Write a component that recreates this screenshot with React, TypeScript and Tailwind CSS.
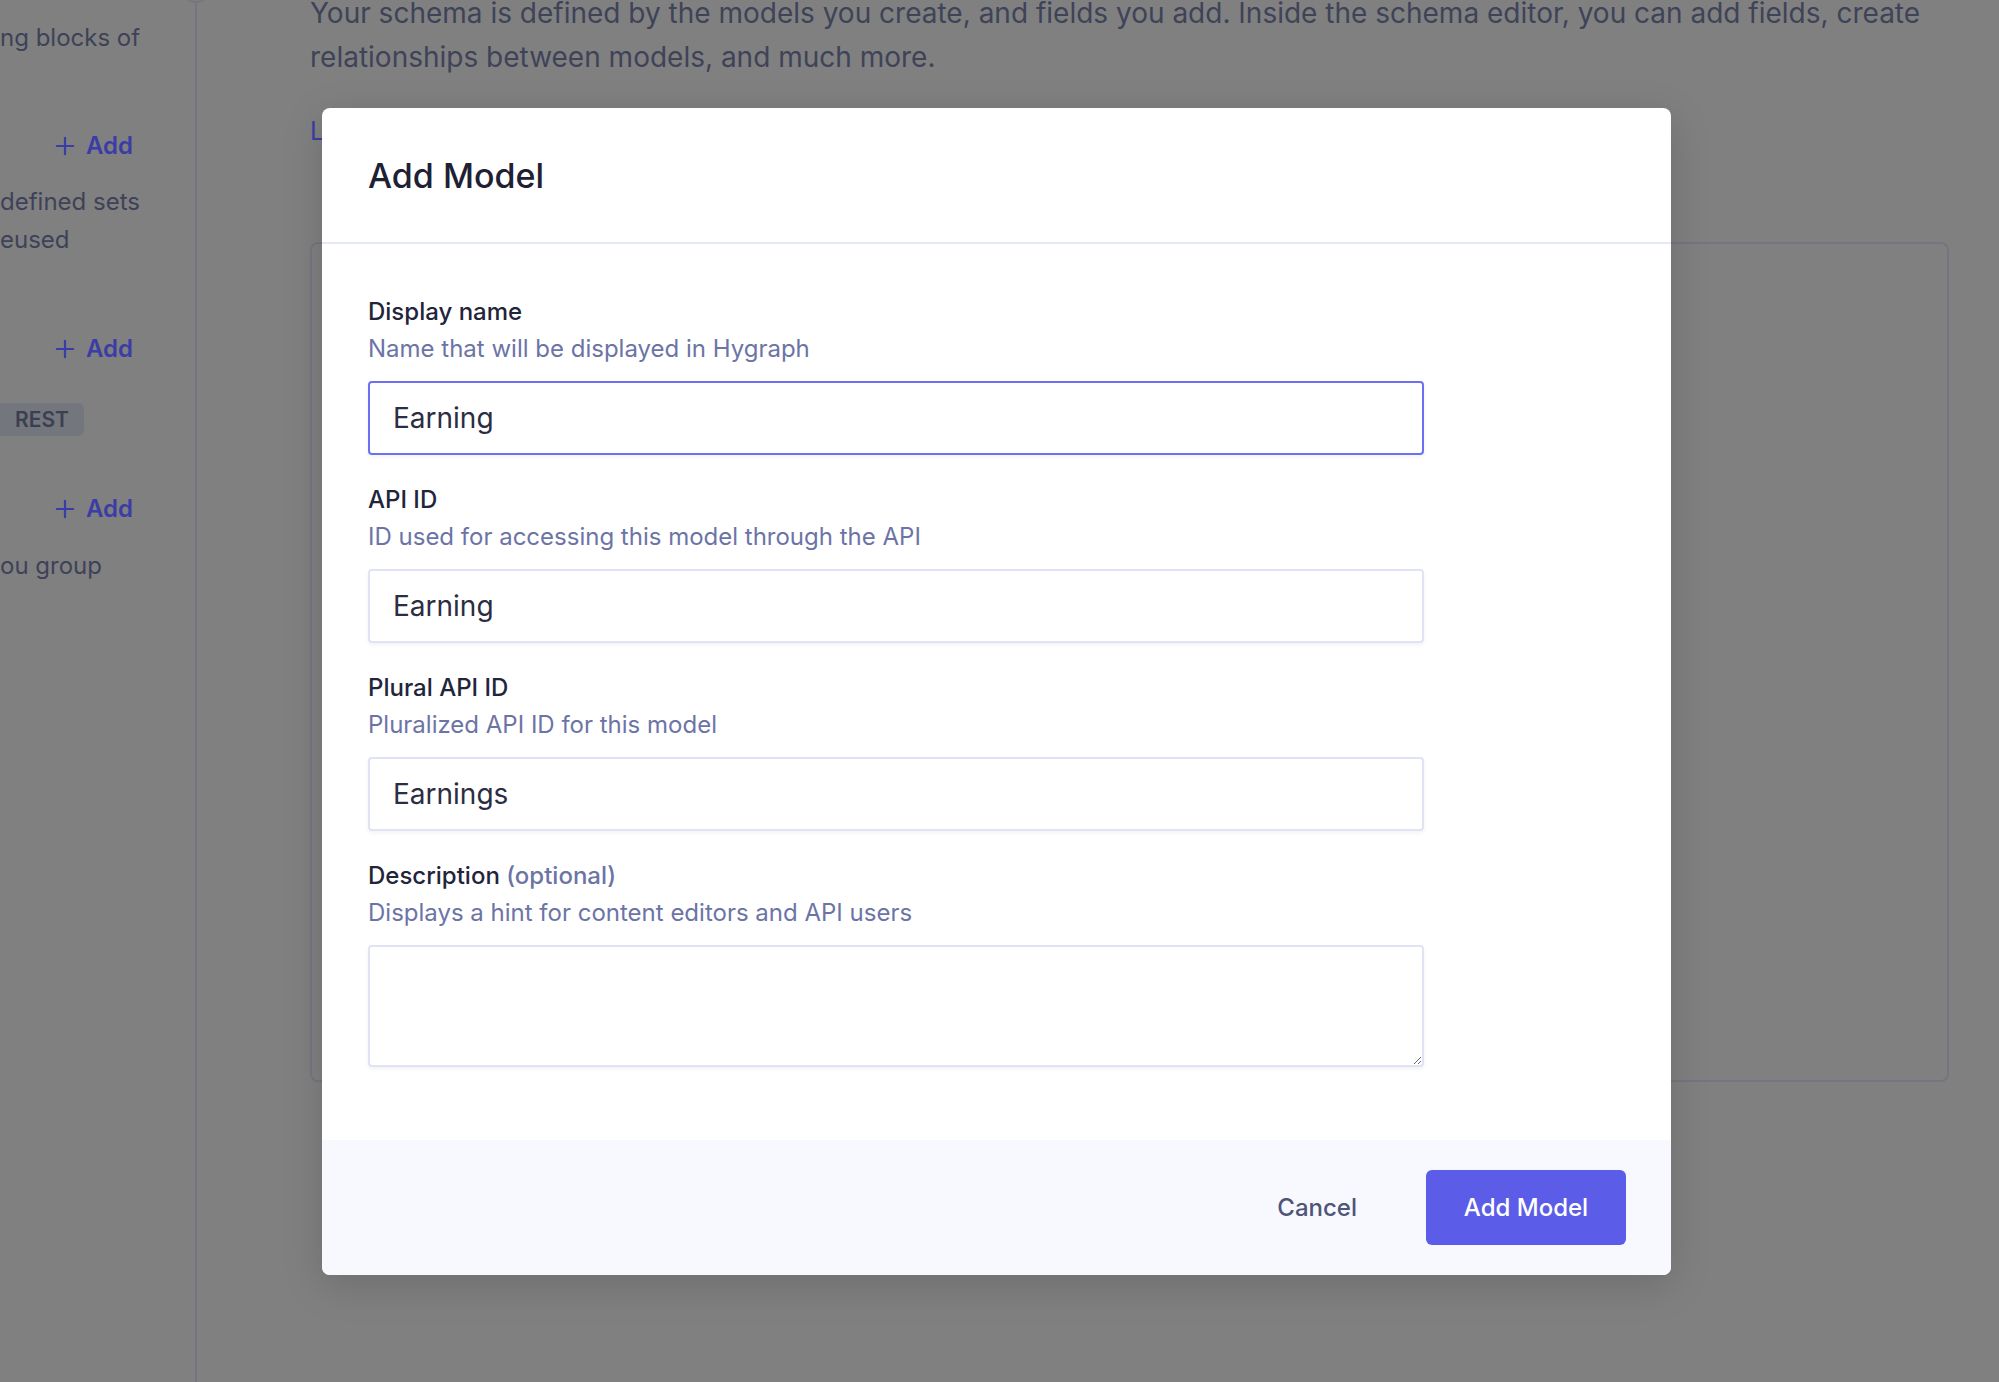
import { Plus } from 'lucide-react';

function SideAdd() {
  return (
    <div className="flex items-center justify-end gap-[7px] text-[24px] font-semibold text-[#3b3da6]">
      <Plus size={28} strokeWidth={1.9} />
      <span>Add</span>
    </div>
  );
}

function Field({
  label,
  optional,
  hint,
  value,
  focused,
  multiline,
}: {
  label: string;
  optional?: boolean;
  hint: string;
  value?: string;
  focused?: boolean;
  multiline?: boolean;
}) {
  const box = focused
    ? 'border-2 border-[#6d70f4]'
    : 'border-2 border-[#e0e3f3]';
  return (
    <div className="flex flex-col">
      <div className="text-[24px] font-medium leading-[36px] text-[#22243a]">
        {label}
        {optional && <span className="text-[#6c74a6]"> (optional)</span>}
      </div>
      <div className="text-[24px] leading-[38px] text-[#6c74a6]">{hint}</div>
      {multiline ? (
        <textarea
          className={`mt-[13px] h-[122px] w-[1056px] rounded-[4px] bg-white px-[22px] py-[16px] text-[28px] text-[#2b2d42] shadow-[0_2px_4px_rgba(30,40,90,0.06)] outline-none ${box}`}
          defaultValue=""
        />
      ) : (
        <div
          className={`mt-[13px] flex h-[74px] w-[1056px] items-center rounded-[4px] bg-white px-[23px] text-[28px] text-[#2b2d42] shadow-[0_2px_4px_rgba(30,40,90,0.06)] ${box}`}
        >
          {value}
        </div>
      )}
    </div>
  );
}

export default function App() {
  return (
    <div className="relative h-[1382px] w-full overflow-hidden bg-[#808080] font-['Inter',sans-serif]">
      {/* page behind the dialog, drawn already dimmed */}
      <div className="flex h-full">
        <aside className="relative w-[197px] shrink-0 whitespace-nowrap border-r-2 border-[#74757e] pr-[62px] text-[24px] text-[#3e4258]">
          <div className="absolute right-[-16px] top-[-27px] h-[30px] w-[30px] rounded-full border-2 border-[#74757e] bg-[#808080]" />
          <div className="pt-[19px] leading-[38px]">ng blocks of</div>
          <div className="mt-[71px]">
            <SideAdd />
          </div>
          <div className="mt-[19px] leading-[38px]">
            <div>defined sets</div>
            <div>eused</div>
          </div>
          <div className="mt-[72px]">
            <SideAdd />
          </div>
          <div className="mt-[36px] flex h-[33px] w-[84px] items-center justify-center rounded-r-[6px] bg-[#74767e] text-[21px] font-semibold text-[#3b3f50]">
            REST
          </div>
          <div className="mt-[55px]">
            <SideAdd />
          </div>
          <div className="mt-[20px] leading-[38px]">ou group</div>
        </aside>

        <main className="flex-1 pl-[113px] pr-[50px]">
          <p className="-mt-[9px] whitespace-nowrap text-[28px] leading-[44px] text-[#3f4358]">
            Your schema is defined by the models you create, and fields you add. Inside the schema editor, you can add fields, create
            <br />
            relationships between models, and much more.
          </p>
          <div className="mt-[34px] text-[25px] leading-[36px] text-[#3b3da6]">Learn more about models</div>
          <div className="mt-[93px] h-[840px] w-[1639px] rounded-[8px] border-2 border-[#74767f]" />
        </main>
      </div>

      {/* dialog */}
      <div className="absolute left-[322px] top-[108px] flex w-[1349px] flex-col overflow-hidden rounded-[8px] bg-white shadow-[0_10px_40px_rgba(0,0,0,0.15)]">
        <div className="flex h-[136px] items-center border-b-2 border-[#e5e8f5] px-[46px]">
          <h2 className="text-[34px] font-medium text-[#1e2033]">Add Model</h2>
        </div>

        <div className="flex flex-col gap-[27px] px-[46px] pb-[73px] pt-[50px]">
          <Field label="Display name" hint="Name that will be displayed in Hygraph" value="Earning" focused />
          <Field label="API ID" hint="ID used for accessing this model through the API" value="Earning" />
          <Field label="Plural API ID" hint="Pluralized API ID for this model" value="Earnings" />
          <Field label="Description" optional hint="Displays a hint for content editors and API users" multiline />
        </div>

        <div className="flex h-[135px] items-center justify-end gap-[32px] bg-[#f8f9fe] px-[45px]">
          <button className="h-[75px] px-[37px] text-[24px] font-medium text-[#4e5577]">Cancel</button>
          <button className="h-[75px] w-[200px] rounded-[6px] bg-[#5b5de9] text-[24px] font-medium text-white">
            Add Model
          </button>
        </div>
      </div>
    </div>
  );
}
